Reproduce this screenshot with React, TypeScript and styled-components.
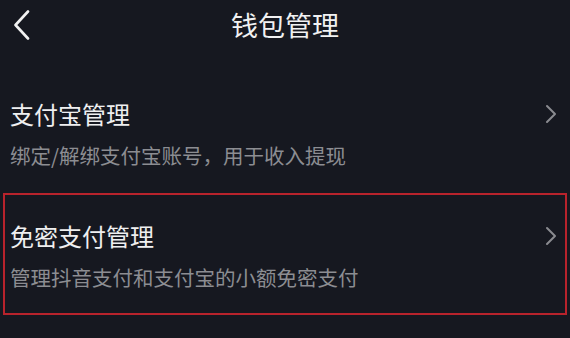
import styled, { createGlobalStyle } from "styled-components";

// ========================================================================================= //
// [ GLOBAL ] ============================================================================== //
// ========================================================================================= //

const GlobalStyle = createGlobalStyle`
  html, body {
    margin: 0;
    padding: 0;
    background-color: #161820;
  }
  body {
    font-family: "Noto Sans CJK SC", "Noto Sans", sans-serif;
    color: #ededee;
  }
  * { box-sizing: border-box; }
`;

// ========================================================================================= //
// [ STYLED COMPONENTS ] =================================================================== //
// ========================================================================================= //

const Screen = styled.main`
  width: 570px;
  height: 338px;
  overflow: hidden;
  background-color: #161820;
`;

const NavBar = styled.header`
  display: grid;
  grid-template-columns: 1fr auto 1fr;
  align-items: center;
  height: 50px;
`;

const BackButton = styled.button`
  display: flex;
  align-items: center;
  justify-self: start;
  margin: 0;
  padding: 0 0 0 12px;
  border: 0;
  background: none;
  cursor: pointer;
`;

const Title = styled.h1`
  margin: 0;
  font-size: 27px;
  font-weight: 400;
  line-height: 34px;
  color: #f1f1f2;
`;

const List = styled.ul`
  margin: 21px 0 0;
  padding: 0;
  list-style: none;
`;

const Row = styled.li<{ $highlighted?: boolean }>`
  display: flex;
  flex-direction: column;
  gap: 13px;
  height: 122px;
  margin: 0 3px;
  padding: 26px 8px 0 5px;
  border: 2px solid ${(p) => (p.$highlighted ? "#b8232c" : "transparent")};
  cursor: pointer;
`;

const RowHead = styled.div`
  display: flex;
  align-items: center;
  justify-content: space-between;
`;

const RowTitle = styled.span`
  font-size: 24px;
  line-height: 30px;
  color: #efeff0;
`;

const RowDesc = styled.span`
  font-size: 20.5px;
  line-height: 26px;
  color: #8c8d92;
`;

// ========================================================================================= //
// [ ICONS ] =============================================================================== //
// ========================================================================================= //

const BackIcon = () => (
  <svg width="20" height="30" viewBox="0 0 20 30" fill="none">
    <path
      d="M16 1.5 L3.5 15 L16 28.5"
      stroke="#f2f2f2"
      strokeWidth="2.6"
      strokeLinecap="round"
      strokeLinejoin="round"
    />
  </svg>
);

const ChevronIcon = () => (
  <svg width="12" height="20" viewBox="0 0 12 20" fill="none">
    <path
      d="M2 2 L10 10 L2 18"
      stroke="#8a8b90"
      strokeWidth="2"
      strokeLinecap="round"
      strokeLinejoin="round"
    />
  </svg>
);

// ========================================================================================= //
// [ EXPORTED COMPONENT ] ================================================================== //
// ========================================================================================= //

const items = [
  { title: "支付宝管理", desc: "绑定/解绑支付宝账号，用于收入提现" },
  { title: "免密支付管理", desc: "管理抖音支付和支付宝的小额免密支付", highlighted: true },
];

export default function App() {
  return (
    <>
      <GlobalStyle />
      <Screen>
        <NavBar>
          <BackButton aria-label="返回">
            <BackIcon />
          </BackButton>
          <Title>钱包管理</Title>
          <span />
        </NavBar>
        <List>
          {items.map((item) => (
            <Row key={item.title} $highlighted={item.highlighted}>
              <RowHead>
                <RowTitle>{item.title}</RowTitle>
                <ChevronIcon />
              </RowHead>
              <RowDesc>{item.desc}</RowDesc>
            </Row>
          ))}
        </List>
      </Screen>
    </>
  );
}
